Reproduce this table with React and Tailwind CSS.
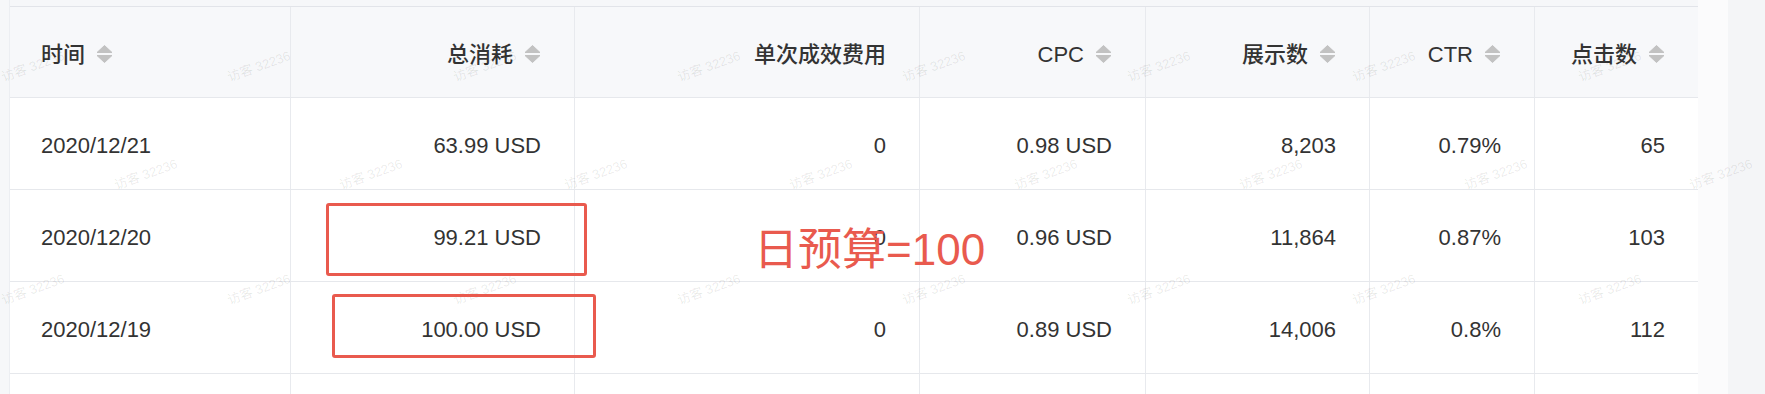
import React from "react";

const cols = [
  { title: "时间", sort: true, align: "left", w: "w-[281px]" },
  { title: "总消耗", sort: true, align: "right", w: "w-[284px]" },
  { title: "单次成效费用", sort: false, align: "right", w: "w-[345px]" },
  { title: "CPC", sort: true, align: "right", w: "w-[226px]" },
  { title: "展示数", sort: true, align: "right", w: "w-[224px]" },
  { title: "CTR", sort: true, align: "right", w: "w-[165px]" },
  { title: "点击数", sort: true, align: "right", w: "w-[163px]" },
];

const rows = [
  ["2020/12/21", "63.99 USD", "0", "0.98 USD", "8,203", "0.79%", "65"],
  ["2020/12/20", "99.21 USD", "0", "0.96 USD", "11,864", "0.87%", "103"],
  ["2020/12/19", "100.00 USD", "0", "0.89 USD", "14,006", "0.8%", "112"],
  ["", "", "", "", "", "", ""],
];

function SortIcon() {
  return (
    <svg width="17" height="20" viewBox="0 0 17 20" className="shrink-0">
      <path d="M8.5 1.5 L16 8.5 L1 8.5 Z" fill="#c2c2c2" stroke="#c2c2c2" strokeWidth="1" strokeLinejoin="round" />
      <path d="M1 11.5 L16 11.5 L8.5 18.5 Z" fill="#c2c2c2" stroke="#c2c2c2" strokeWidth="1" strokeLinejoin="round" />
    </svg>
  );
}

function Watermarks() {
  const items = [];
  const rowA = [0, 226, 452, 676, 901, 1126, 1351, 1577];
  const rowB = [113, 338, 563, 788, 1013, 1238, 1463, 1688];
  rowA.forEach((x) => items.push([x, 60]));
  rowB.forEach((x) => items.push([x, 168]));
  rowA.forEach((x) => items.push([x, 283]));
  return (
    <div className="pointer-events-none absolute inset-0">
      {items.map(([x, y], i) => (
        <span
          key={i}
          className="absolute whitespace-nowrap text-[13px] leading-none text-[rgba(0,0,0,0.09)] origin-left -rotate-[20deg]"
          style={{ left: x + 2, top: y + 11 }}
        >
          访客 32236
        </span>
      ))}
    </div>
  );
}

export default function App() {
  return (
    <div className="relative flex h-[394px] w-[1765px] overflow-hidden bg-[#f4f5f7] font-['Liberation_Sans','Noto_Sans_CJK_SC',sans-serif] text-[22px] text-[#333]">
      <div className="w-[10px] shrink-0 border-r border-[#eceef2] bg-[#f6f7f9]" />
      <div className="flex w-[1688px] shrink-0 flex-col bg-white">
        <div className="h-[7px] shrink-0 border-b-[1.5px] border-[#e2e4e9] bg-[#f6f7f9]" />
        <div className="flex h-[91px] shrink-0 border-b border-[#e6e8ec] bg-[#f7f8fa]">
          {cols.map((c, i) => (
            <div
              key={i}
              className={`${c.w} flex shrink-0 items-center gap-[11px] pt-[4px] ${
                c.align === "left" ? "justify-start pl-[31px]" : "justify-end pr-[33px]"
              } ${i < cols.length - 1 ? "border-r border-[#e8eaee]" : ""}`}
            >
              <span className="font-medium text-[#333]">{c.title}</span>
              {c.sort && <SortIcon />}
            </div>
          ))}
        </div>
        {rows.map((r, ri) => (
          <div key={ri} className="flex h-[92px] shrink-0 border-b border-[#e6e8ec]">
            {r.map((v, i) => (
              <div
                key={i}
                className={`${cols[i].w} flex shrink-0 items-center pt-[3px] ${
                  cols[i].align === "left" ? "justify-start pl-[31px]" : "justify-end pr-[33px]"
                } ${i < cols.length - 1 ? "border-r border-[#e8eaee]" : ""}`}
              >
                {v}
              </div>
            ))}
          </div>
        ))}
      </div>
      <div className="w-[30px] shrink-0 bg-[#fbfbfc]" />
      <div className="flex-1 bg-[#f4f5f7]" />

      <Watermarks />

      <div className="pointer-events-none absolute left-[326px] top-[203px] h-[73px] w-[261px] rounded-[3px] border-[3px] border-[#e95a4e]" />
      <div className="pointer-events-none absolute left-[332px] top-[294px] h-[64px] w-[264px] rounded-[3px] border-[3px] border-[#e95a4e]" />
      <div className="pointer-events-none absolute left-[754px] top-[228px] whitespace-nowrap text-[44px] leading-none text-[#e95a4e]">
        日预算=100
      </div>
    </div>
  );
}
